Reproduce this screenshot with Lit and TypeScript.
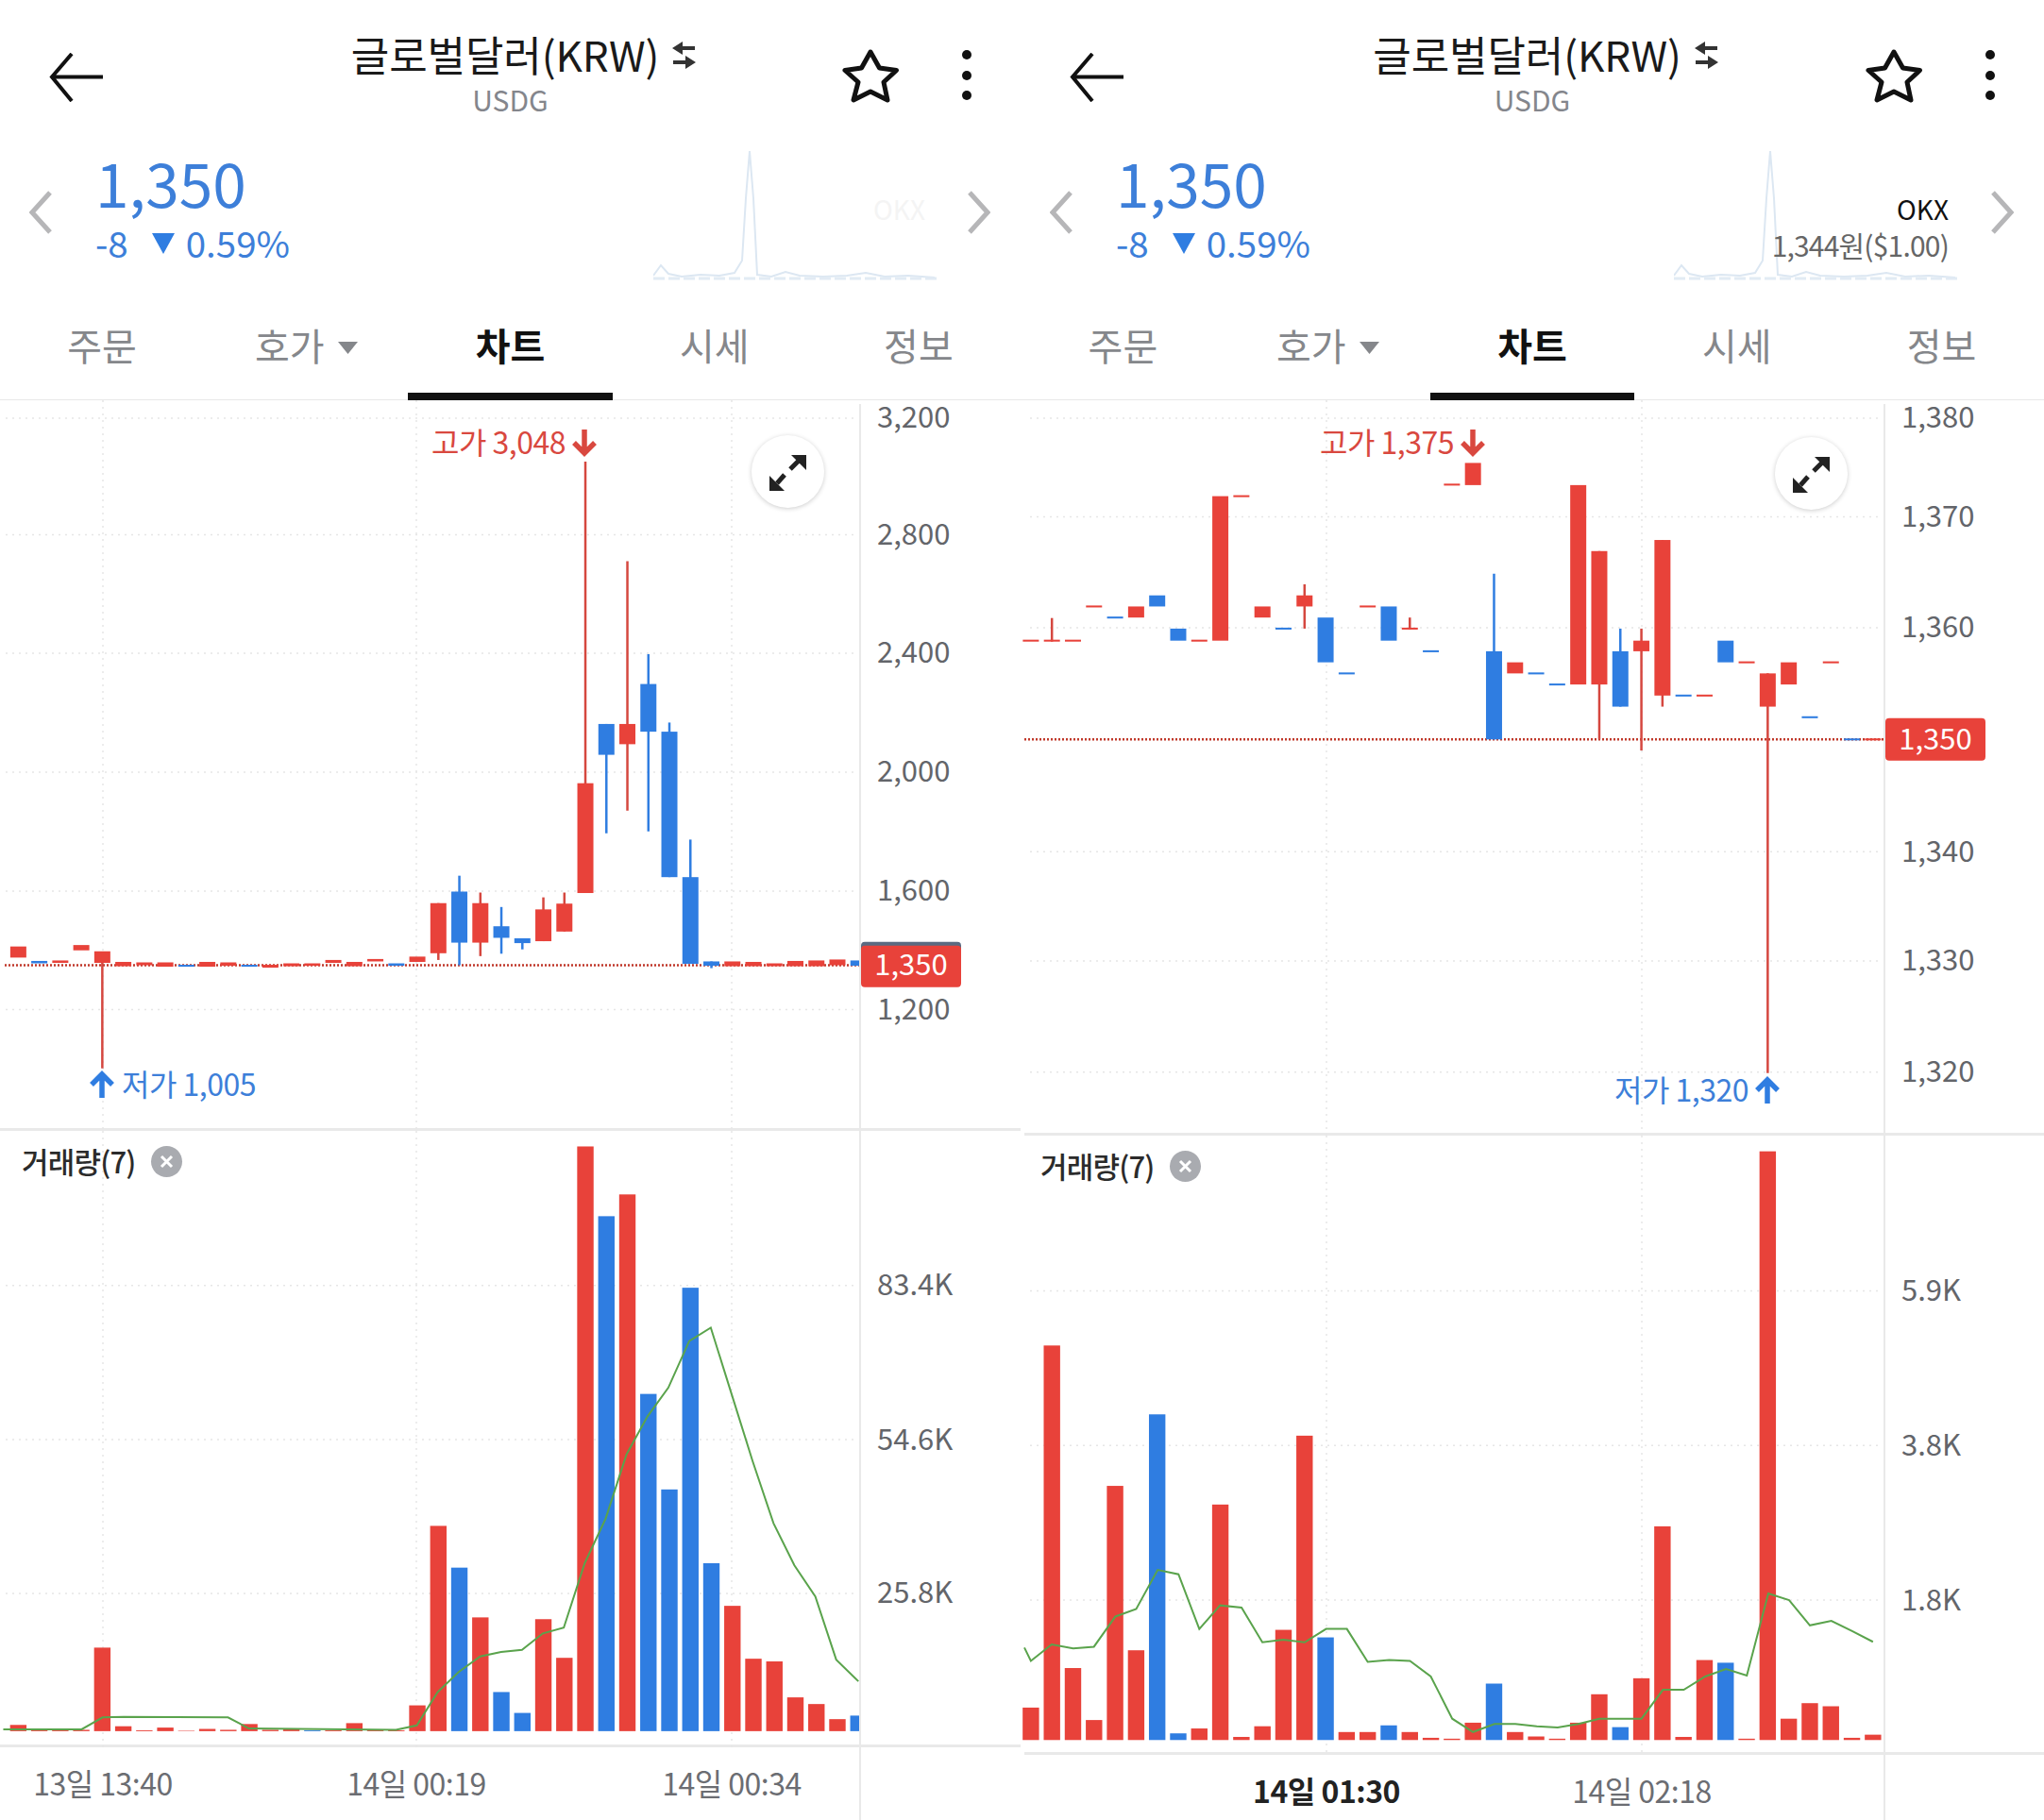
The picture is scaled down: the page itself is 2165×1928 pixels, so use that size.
import { LitElement, html, svg, css } from 'lit'
import { customElement, property } from 'lit/decorators.js'

type Tone = 'r' | 'b'
// tone, body top, body bottom, optional wick top / bottom
type Candle = [Tone, number, number, number?, number?]
type Bar = [Tone, number]

interface Tick { label: string; y: number }
interface PaneData {
  shifted: boolean
  showRate: boolean
  xOrigin: number
  xStep: number
  xScale: number
  volumeOffset: number
  priceHeight: number
  volumeHeight: number
  lastY: number
  candles: Candle[]
  bars: Bar[]
  barBase: number
  ma: number[][]
  priceTicks: Tick[]
  volumeTicks: Tick[]
  vGrid: number[]
  times: { label: string; x: number; strong?: boolean }[]
  timeY: number
  high: { label: string; textEnd: number; cx: number; top: number }
  low: { label: string; cx: number; top: number; textX: number; anchor: 'start' | 'end' }
  badgeTop: number
  spark: string
  expandLeft: number
  expandTop: number
  legendLeft: number
}

// candle and bar values are read off the reference, then scaled once in the panel
const PRICE_Y = 800 / 1568
const VOLUME_Y = 738 / 1568
const PLOT_RIGHT = 910
// central baseline sits a little low for this font
const TEXT_NUDGE = -3

const leftCandles: Candle[] = [
  ['r', 1142, 1165], ['b', 1172, 1177], ['r', 1171, 1176], ['r', 1139, 1150],
  ['r', 1152, 1176, 1176, 1395], ['r', 1174, 1183], ['r', 1175, 1181], ['r', 1175, 1184],
  ['b', 1180, 1184], ['r', 1174, 1184], ['r', 1175, 1182], ['b', 1180, 1184],
  ['r', 1180, 1186], ['r', 1177, 1183], ['r', 1177, 1182], ['r', 1170, 1176],
  ['r', 1174, 1183], ['r', 1168, 1173], ['b', 1177, 1182], ['r', 1163, 1174],
  ['r', 1052, 1156, 1052, 1170], ['b', 1028, 1134, 995, 1181], ['r', 1052, 1134, 1030, 1162],
  ['b', 1100, 1124, 1060, 1157], ['b', 1125, 1135, 1125, 1148], ['r', 1065, 1131, 1040, 1131],
  ['r', 1053, 1111, 1030, 1111], ['r', 803, 1031, 135, 1031], ['b', 680, 744, 680, 907],
  ['r', 680, 722, 342, 860], ['b', 597, 696, 535, 903], ['b', 696, 998, 677, 998],
  ['b', 998, 1178, 920, 1178], ['b', 1173, 1182, 1173, 1187], ['r', 1173, 1183],
  ['r', 1174, 1183], ['r', 1177, 1183], ['r', 1172, 1183], ['r', 1171, 1183],
  ['r', 1169, 1181], ['b', 1171, 1182],
]

const rightCandles: Candle[] = [
  ['r', 505, 509], ['r', 505, 509, 460, 509], ['r', 505, 509], ['r', 434, 438],
  ['b', 457, 461], ['r', 436, 459], ['b', 413, 436], ['b', 482, 507],
  ['r', 505, 509], ['r', 207, 507], ['r', 205, 209], ['r', 436, 459],
  ['b', 480, 484], ['r', 413, 436, 390, 482], ['b', 459, 552], ['b', 573, 577],
  ['r', 434, 438], ['b', 436, 507], ['r', 480, 484, 459, 484], ['b', 527, 531],
  ['r', 181, 185], ['r', 138, 184], ['b', 529, 712, 368, 712], ['r', 552, 575],
  ['b', 573, 577], ['b', 596, 600], ['r', 184, 598], ['r', 321, 598, 321, 712],
  ['b', 529, 644, 482, 644], ['r', 507, 529, 482, 735], ['r', 298, 621, 298, 644],
  ['b', 619, 623], ['r', 619, 623], ['b', 507, 552], ['r', 550, 554],
  ['r', 575, 644, 575, 1405], ['r', 552, 598], ['b', 664, 668], ['r', 550, 554],
  ['b', 710, 714], ['r', 710, 714],
]

const leftBars: Bar[] = [
  ['r', 1354], ['r', 1366], ['r', 1365], ['r', 1365], ['r', 1180], ['r', 1357], ['r', 1366],
  ['r', 1360], ['r', 1367], ['r', 1363], ['r', 1365], ['r', 1352], ['r', 1365], ['r', 1364],
  ['b', 1366], ['r', 1366], ['r', 1350], ['r', 1365], ['r', 1366], ['r', 1310], ['r', 906],
  ['b', 1000], ['r', 1112], ['b', 1280], ['b', 1327], ['r', 1116], ['r', 1203], ['r', 52],
  ['b', 209], ['r', 160], ['b', 609], ['b', 824], ['b', 370], ['b', 990], ['r', 1086],
  ['r', 1205], ['r', 1211], ['r', 1292], ['r', 1307], ['r', 1341], ['b', 1333],
]

const rightBars: Bar[] = [
  ['r', 1315], ['r', 500], ['r', 1226], ['r', 1343], ['r', 816], ['r', 1186], ['b', 655],
  ['b', 1373], ['r', 1362], ['r', 858], ['r', 1381], ['r', 1357], ['r', 1140], ['r', 703],
  ['b', 1157], ['r', 1370], ['r', 1370], ['b', 1355], ['r', 1370], ['r', 1383], ['r', 1385],
  ['r', 1349], ['b', 1261], ['r', 1370], ['r', 1380], ['r', 1385], ['r', 1349], ['r', 1285],
  ['b', 1359], ['r', 1249], ['r', 907], ['r', 1381], ['r', 1208], ['b', 1214], ['r', 1385],
  ['r', 63], ['r', 1340], ['r', 1305], ['r', 1312], ['r', 1383], ['r', 1376],
]

const leftMa = [
  [5, 1364], [125, 1364], [157, 1337], [189, 1336], [349, 1337], [381, 1362], [606, 1365],
  [638, 1355], [670, 1280], [702, 1235], [735, 1200], [767, 1190], [799, 1185], [831, 1148],
  [863, 1135], [895, 990], [927, 890], [959, 745], [991, 660], [1023, 595], [1055, 490],
  [1088, 460], [1120, 610], [1152, 760], [1184, 900], [1216, 995], [1248, 1065], [1280, 1207],
  [1314, 1256],
]

const rightMa = [
  [0, 1180], [10, 1210], [42, 1173], [75, 1182], [107, 1178], [140, 1110], [172, 1093],
  [205, 1005], [237, 1015], [269, 1138], [301, 1085], [334, 1090], [366, 1168], [398, 1162],
  [431, 1168], [464, 1138], [496, 1138], [528, 1212], [561, 1208], [593, 1210], [625, 1245],
  [658, 1340], [690, 1370], [723, 1352], [755, 1352], [788, 1357], [820, 1360], [852, 1352],
  [884, 1340], [917, 1340], [949, 1340], [982, 1275], [1014, 1275], [1047, 1245], [1079, 1228],
  [1111, 1243], [1144, 1058], [1176, 1073], [1208, 1130], [1241, 1120], [1273, 1143], [1305, 1167],
]

const sparkLine = '0,132 8,121 16,130 30,133 50,131 70,132 86,129 94,116 98,50 102,0 106,50 110,131 125,133 140,128 155,132 180,133 205,132 225,129 245,133 270,132 298,134'

const panes: PaneData[] = [
  {
    shifted: false, showRate: false,
    xOrigin: 28, xStep: 32.15, xScale: 1085 / 1568, volumeOffset: -8,
    priceHeight: 774, volumeHeight: 653, lastY: 1181,
    candles: leftCandles, bars: leftBars, barBase: 1368, ma: leftMa,
    priceTicks: [
      { label: '3,200', y: 45 }, { label: '2,800', y: 287 }, { label: '2,400', y: 533 },
      { label: '2,000', y: 780 }, { label: '1,600', y: 1027 }, { label: '1,200', y: 1273 },
    ],
    volumeTicks: [{ label: '83.4K', y: 365 }, { label: '54.6K', y: 712 }, { label: '25.8K', y: 1058 }],
    vGrid: [109, 441, 775],
    times: [{ label: '13일 13:40', x: 109 }, { label: '14일 00:19', x: 441 }, { label: '14일 00:34', x: 775 }],
    timeY: 40,
    high: { label: '고가 3,048', textEnd: 599, cx: 619, top: 31 },
    low: { label: '저가 1,005', cx: 108, top: 712, textX: 129, anchor: 'start' },
    badgeTop: 1140, spark: sparkLine,
    expandLeft: 796, expandTop: 37, legendLeft: 23,
  },
  {
    shifted: true, showRate: true,
    xOrigin: 10, xStep: 32.375, xScale: 1080 / 1568, volumeOffset: -13,
    priceHeight: 779, volumeHeight: 656, lastY: 712,
    candles: rightCandles, bars: rightBars, barBase: 1388, ma: rightMa,
    priceTicks: [
      { label: '1,380', y: 45 }, { label: '1,370', y: 250 }, { label: '1,360', y: 480 },
      { label: '1,340', y: 945 }, { label: '1,330', y: 1172 }, { label: '1,320', y: 1403 },
    ],
    volumeTicks: [{ label: '5.9K', y: 377 }, { label: '3.8K', y: 725 }, { label: '1.8K', y: 1073 }],
    vGrid: [320, 654],
    times: [{ label: '14일 01:30', x: 320, strong: true }, { label: '14일 02:18', x: 654 }],
    timeY: 40,
    high: { label: '고가 1,375', textEnd: 455, cx: 475, top: 31 },
    low: { label: '저가 1,320', cx: 787, top: 718, textX: 767, anchor: 'end' },
    badgeTop: 668, spark: sparkLine,
    expandLeft: 795, expandTop: 39, legendLeft: 17,
  },
]

@customElement('coin-pane')
export class CoinPane extends LitElement {
  static styles = css`
    :host {
      display: block;
      height: 1928px;
      overflow: hidden;
      background: #fff;
      font-family: "Noto Sans CJK KR", "Noto Sans", sans-serif;
    }

    .header {
      display: grid;
      grid-template-columns: 240px 1fr 240px;
      height: 125px;
    }

    .back {
      padding: 56px 0 0 52px;
    }

    .center {
      padding-top: 29px;
      text-align: center;
    }

    .title {
      display: flex;
      align-items: center;
      justify-content: center;
      gap: 14px;
      margin-left: 28px;
      font-size: 44px;
      line-height: 56px;
      letter-spacing: -0.1px;
      color: #1a1a1a;
    }

    .title svg {
      margin-top: 2px;
    }

    .code {
      margin-top: 2px;
      font-size: 30px;
      line-height: 36px;
      color: #84868c;
    }

    .actions {
      display: flex;
      justify-content: flex-end;
      gap: 65px;
      padding: 52px 52px 0 0;
    }

    .quote {
      position: relative;
      display: flex;
      align-items: center;
      height: 200px;
      padding: 0 32px 0 31px;
    }

    .spark {
      position: absolute;
      left: 692px;
      top: 35px;
    }

    .figures {
      position: relative;
      margin: 0 0 19px 46px;
      color: #3d7fd9;
    }

    .price {
      font-size: 64px;
      line-height: 81px;
    }

    .delta {
      display: flex;
      align-items: center;
      font-size: 38.5px;
      line-height: 46px;
    }

    .delta svg {
      margin: 4px 12px 0 25px;
    }

    .source {
      position: relative;
      margin: 30px 45px 0 auto;
      text-align: right;
    }

    .exchange {
      font-size: 28px;
      line-height: 38px;
      color: #111;
    }

    .faint {
      color: #f4f4f4;
    }

    .rate {
      font-size: 30px;
      line-height: 38px;
      letter-spacing: -0.8px;
      color: #666;
    }

    .tabs {
      display: grid;
      grid-template-columns: repeat(5, 1fr);
      height: 99px;
      box-sizing: border-box;
      border-bottom: 1px solid #e8e8e8;
    }

    .tab {
      display: flex;
      justify-content: center;
      gap: 14px;
      height: 99px;
      box-sizing: border-box;
      padding-top: 15px;
      font-size: 40px;
      line-height: 50px;
      color: #85878b;
    }

    .tab svg {
      margin-top: 22px;
    }

    .tab.active {
      border-bottom: 8px solid #111;
      font-weight: 700;
      color: #111;
    }

    .chart.shifted {
      padding-left: 4px;
    }

    .panel {
      position: relative;
      box-sizing: border-box;
      border-bottom: 3px solid #e9e9e9;
    }

    .panel.last {
      border-bottom: none;
    }

    .panel svg {
      display: block;
      overflow: visible;
    }

    .expand {
      position: absolute;
      width: 77px;
      height: 77px;
      border-radius: 50%;
      background: #fff;
      box-shadow: 0 1px 5px rgba(0, 0, 0, 0.2);
    }

    .legend {
      position: absolute;
      top: 12px;
      display: flex;
      align-items: center;
      gap: 16px;
      font-size: 31px;
      line-height: 40px;
      font-weight: 500;
      letter-spacing: -0.8px;
      color: #2b2b2b;
    }

    .axis-text {
      font-size: 31px;
      fill: #63656a;
      dominant-baseline: central;
    }

    .time-text {
      font-size: 32px;
      fill: #6b6d72;
      letter-spacing: -0.5px;
      text-anchor: middle;
      dominant-baseline: central;
    }

    .time-text.strong {
      font-weight: 700;
      fill: #222;
    }

    .badge-text {
      font-size: 31px;
      fill: #fff;
      text-anchor: middle;
      dominant-baseline: central;
    }

    .mark {
      font-size: 32px;
      letter-spacing: -0.5px;
      dominant-baseline: central;
    }

    .mark.high {
      fill: #d9483f;
    }

    .mark.low {
      fill: #3d7fd9;
    }
  `

  @property({ attribute: false }) data!: PaneData

  private _x(k: number) {
    return (this.data.xOrigin + k * this.data.xStep) * this.data.xScale
  }

  private _priceY(v: number) {
    return v * PRICE_Y - 4
  }

  private _volumeY(v: number) {
    return v * VOLUME_Y + this.data.volumeOffset
  }

  private _column(x: number, width: number) {
    // the last column is cut off by the axis line
    return Math.max(0, Math.min(width, PLOT_RIGHT - x))
  }

  private _grid(height: number) {
    return this.data.vGrid.map(x => svg`
      <line x1=${x} x2=${x} y1="0" y2=${height} stroke="#e6e6e6" stroke-width="1.5" stroke-dasharray="2 5"></line>
    `)
  }

  private _ticks(ticks: Tick[], toY: (v: number) => number) {
    return ticks.map(t => svg`
      <line x1="6" x2="908" y1=${toY(t.y)} y2=${toY(t.y)} stroke="#e6e6e6" stroke-width="1.5" stroke-dasharray="2 5"></line>
      <text class="axis-text" x="929" y=${toY(t.y) + TEXT_NUDGE}>${t.label}</text>
    `)
  }

  private _arrow(cx: number, top: number, down: boolean, color: string) {
    const bottom = top + 27
    const d = down
      ? `M${cx} ${top}V${bottom - 2}M${cx - 11} ${bottom - 13}L${cx} ${bottom - 2}L${cx + 11} ${bottom - 13}`
      : `M${cx} ${bottom}V${top + 2}M${cx - 11} ${top + 13}L${cx} ${top + 2}L${cx + 11} ${top + 13}`
    return svg`<path d=${d} fill="none" stroke=${color} stroke-width="5.5"></path>`
  }

  private _renderPrice() {
    const d = this.data
    const badgeY = this._priceY(d.badgeTop)
    const lastY = this._priceY(d.lastY)
    return html`
      <div class="panel" style="height:${d.priceHeight}px">
        <svg width="1085" height=${d.priceHeight - 3}>
          ${this._grid(d.priceHeight)}
          ${this._ticks(d.priceTicks, v => this._priceY(v))}
          <line x1=${d.shifted ? 0 : 5} x2="911" y1=${lastY} y2=${lastY} stroke="#c0392b" stroke-width="2.5" stroke-dasharray="2 2"></line>
          ${d.candles.map((c, k) => {
            const [tone, top, bottom, wickTop, wickBottom] = c
            const x = this._x(k)
            const fill = tone === 'r' ? '#e8423a' : '#2f7de1'
            return svg`
              ${wickTop !== undefined ? svg`
                <line x1=${x} x2=${x} y1=${this._priceY(wickTop)} y2=${this._priceY(wickBottom!)} stroke=${tone === 'r' ? '#d5473f' : '#2f7de1'} stroke-width="2.5"></line>
              ` : ''}
              <rect x=${x - 8.5} y=${this._priceY(top)} width=${this._column(x - 8.5, 17)} height=${(bottom - top) * PRICE_Y} fill=${fill}></rect>
            `
          })}
          <line x1="911" x2="911" y1="4" y2=${d.priceHeight} stroke="#e9e9e9" stroke-width="2"></line>
          ${d.shifted ? '' : svg`<rect x="912" y=${badgeY - 4} width="106" height="12" rx="4" fill="#5b6b82"></rect>`}
          <rect x="912" y=${badgeY} width="106" height=${d.shifted ? 45 : 44} rx="4" fill="#e8423a"></rect>
          <text class="badge-text" x="965" y=${lastY + TEXT_NUDGE}>1,350</text>
          <text class="mark high" text-anchor="end" x=${d.high.textEnd} y=${d.high.top + 15 + TEXT_NUDGE}>${d.high.label}</text>
          ${this._arrow(d.high.cx, d.high.top, true, '#d9483f')}
          <text class="mark low" text-anchor=${d.low.anchor} x=${d.low.textX} y=${d.low.top + 14 + TEXT_NUDGE}>${d.low.label}</text>
          ${this._arrow(d.low.cx, d.low.top, false, '#2f7de1')}
        </svg>
        <div class="expand" style="left:${d.expandLeft}px;top:${d.expandTop}px">
          <svg width="77" height="77" viewBox="0 0 77 77" fill="#222">
            <path d="M42 21H58V37Z"></path>
            <path d="M19 43V59H35Z"></path>
            <path d="M41 36L50 27" fill="none" stroke="#222" stroke-width="5"></path>
            <path d="M35 42L27 51" fill="none" stroke="#222" stroke-width="5"></path>
          </svg>
        </div>
      </div>
    `
  }

  private _renderVolume() {
    const d = this.data
    const base = this._volumeY(d.barBase)
    const line = d.ma.map(p => `${p[0] * d.xScale},${this._volumeY(p[1])}`).join(' ')
    return html`
      <div class="panel" style="height:${d.volumeHeight}px">
        <svg width="1085" height=${d.volumeHeight - 3}>
          ${this._grid(d.volumeHeight)}
          ${this._ticks(d.volumeTicks, v => this._volumeY(v))}
          ${d.bars.map((b, k) => {
            const y = this._volumeY(b[1])
            const x = this._x(k) - 8.7
            return svg`<rect x=${x} y=${y} width=${this._column(x, 17.4)} height=${base - y} fill=${b[0] === 'r' ? '#e8423a' : '#2f7de1'}></rect>`
          })}
          <polyline points=${line} fill="none" stroke="#5aa34c" stroke-width="2"></polyline>
          <line x1="911" x2="911" y1="0" y2=${d.volumeHeight} stroke="#e9e9e9" stroke-width="2"></line>
        </svg>
        <div class="legend" style="left:${d.legendLeft}px">
          거래량(7)
          <svg width="33" height="33" viewBox="0 0 33 33">
            <circle cx="16.5" cy="16.5" r="16.5" fill="#a9abb0"></circle>
            <path d="M11 11L22 22M22 11L11 22" stroke="#fff" stroke-width="3"></path>
          </svg>
        </div>
      </div>
    `
  }

  private _renderTime() {
    const d = this.data
    return html`
      <div class="panel last">
        <svg width="1085" height="80">
          <line x1="911" x2="911" y1="0" y2="80" stroke="#e9e9e9" stroke-width="2"></line>
          ${d.times.map(t => svg`
            <text class="time-text ${t.strong ? 'strong' : ''}" x=${t.x} y=${d.timeY + TEXT_NUDGE}>${t.label}</text>
          `)}
        </svg>
      </div>
    `
  }

  render() {
    const d = this.data
    return html`
      <div class="header">
        <div class="back">
          <svg width="58" height="52" viewBox="0 0 58 52" fill="none" stroke="#111" stroke-width="4">
            <path d="M57 25.5H3M24 1L3 25.5L24 51"></path>
          </svg>
        </div>
        <div class="center">
          <div class="title">
            글로벌달러(KRW)
            <svg width="25" height="29" viewBox="0 0 25 29" fill="#333">
              <path d="M0 7L11 0V5H24V9H11V14Z"></path>
              <path d="M25 22L14 15V20H1V24H14V29Z"></path>
            </svg>
          </div>
          <div class="code">USDG</div>
        </div>
        <div class="actions">
          <svg width="62" height="60" viewBox="0 0 62 60" fill="none" stroke="#111" stroke-width="5" stroke-linejoin="round">
            <path d="M30 3L39.5 20L57.5 22.5L44 35L48 54L30 45L12 54L17 35L3 22.5L20.5 20Z"></path>
          </svg>
          <svg width="10" height="56" viewBox="0 0 10 56" fill="#111">
            <circle cx="5" cy="6" r="5"></circle>
            <circle cx="5" cy="28" r="5"></circle>
            <circle cx="5" cy="49" r="5"></circle>
          </svg>
        </div>
      </div>

      <div class="quote">
        <svg class="spark" width="300" height="140" fill="none">
          <polyline points=${d.spark} stroke="#dce7f2" stroke-width="2"></polyline>
          <polyline points="0,135 300,135" stroke="#e2ebf4" stroke-width="3" stroke-dasharray="12 4"></polyline>
        </svg>
        <svg width="24" height="46" viewBox="0 0 24 46" fill="none" stroke="#b6b6b8" stroke-width="5">
          <path d="M22 2L3 23L22 44"></path>
        </svg>
        <div class="figures">
          <div class="price">1,350</div>
          <div class="delta">
            -8
            <svg width="24" height="22" viewBox="0 0 24 22" fill="#2f7de1"><path d="M0 0H24L12 22Z"></path></svg>
            0.59%
          </div>
        </div>
        <div class="source">
          <div class="exchange ${d.showRate ? '' : 'faint'}">OKX</div>
          <div class="rate">${d.showRate ? '1,344원($1.00)' : html`&nbsp;`}</div>
        </div>
        <svg width="24" height="46" viewBox="0 0 24 46" fill="none" stroke="#b6b6b8" stroke-width="5">
          <path d="M2 2L21 23L2 44"></path>
        </svg>
      </div>

      <div class="tabs">
        <div class="tab">주문</div>
        <div class="tab">
          호가
          <svg width="21" height="13" viewBox="0 0 21 13" fill="#85878b"><path d="M0 0H21L10.5 13Z"></path></svg>
        </div>
        <div class="tab active">차트</div>
        <div class="tab">시세</div>
        <div class="tab">정보</div>
      </div>

      <div class="chart ${d.shifted ? 'shifted' : ''}">
        ${this._renderPrice()}
        ${this._renderVolume()}
        ${this._renderTime()}
      </div>
    `
  }
}

@customElement('app-root')
export class AppRoot extends LitElement {
  static styles = css`
    :host {
      display: grid;
      grid-template-columns: 1081px 1084px;
      width: 2165px;
      height: 1928px;
      overflow: hidden;
      background: #fff;
    }
  `

  render() {
    return html`${panes.map(p => html`<coin-pane .data=${p}></coin-pane>`)}`
  }
}

declare global {
  interface HTMLElementTagNameMap {
    'app-root': AppRoot
    'coin-pane': CoinPane
  }
}
